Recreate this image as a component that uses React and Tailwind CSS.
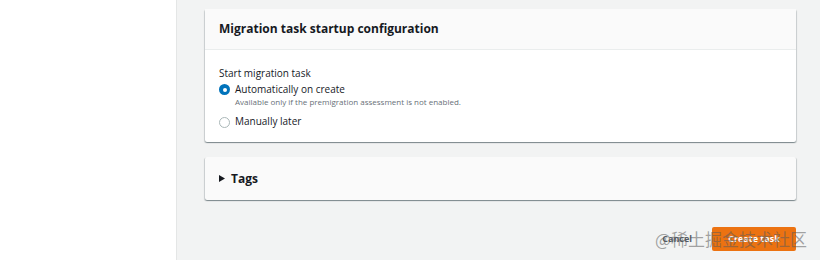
import React, { useState } from "react";

function Radio({ checked }) {
  return checked ? (
    <span className="mt-[1px] flex h-[11px] w-[11px] shrink-0 items-center justify-center rounded-full bg-[#0073bb]">
      <span className="h-[4px] w-[4px] rounded-full bg-white" />
    </span>
  ) : (
    <span className="mt-[1px] h-[11px] w-[11px] shrink-0 rounded-full border border-[#aab7b8] bg-white" />
  );
}

export default function App() {
  const [mode, setMode] = useState("auto");

  return (
    <div
      className="relative flex h-[260px] w-[820px] overflow-hidden bg-[#f2f3f3] text-[#16191f]"
      style={{ fontFamily: '"Open Sans", "Noto Sans", Arial, sans-serif' }}
    >
      <aside className="h-full w-[177px] shrink-0 border-r border-[#e4e6e6] bg-white" />

      <main className="flex flex-1 flex-col pl-[28px] pr-[24px] pt-[9px]">
        <section className="rounded-[2px] bg-white shadow-[0_1px_1px_0_rgba(0,28,36,0.3),1px_1px_1px_0_rgba(0,28,36,0.15),-1px_1px_1px_0_rgba(0,28,36,0.15)]">
          <div className="flex h-[41px] items-center border-b border-[#eaeded] bg-[#fafafa] px-[14px]">
            <h2 className="text-[12px] font-bold">Migration task startup configuration</h2>
          </div>
          <div className="px-[14px] pb-[14px] pt-[16px]">
            <div className="text-[10px] leading-[14px]">Start migration task</div>
            <label className="mt-[3px] flex cursor-pointer gap-[5px]" onClick={() => setMode("auto")}>
              <Radio checked={mode === "auto"} />
              <span className="flex flex-col">
                <span className="text-[10px] leading-[13px]">Automatically on create</span>
                <span className="text-[8px] leading-[11px] text-[#687078]">
                  Available only if the premigration assessment is not enabled.
                </span>
              </span>
            </label>
            <label className="mt-[8px] flex cursor-pointer items-center gap-[5px]" onClick={() => setMode("manual")}>
              <Radio checked={mode === "manual"} />
              <span className="text-[10px] leading-[13px]">Manually later</span>
            </label>
          </div>
        </section>

        <section className="mt-[15px] flex h-[43px] items-center gap-[6px] rounded-[2px] bg-[#fafafa] px-[14px] shadow-[0_1px_1px_0_rgba(0,28,36,0.3),1px_1px_1px_0_rgba(0,28,36,0.15),-1px_1px_1px_0_rgba(0,28,36,0.15)]">
          <svg width="6" height="7" viewBox="0 0 6 7">
            <path d="M0 0 L6 3.5 L0 7 Z" fill="#16191f" />
          </svg>
          <span className="text-[12px] font-bold">Tags</span>
        </section>

        <div className="mt-[27px] flex items-center justify-end gap-[20px]">
          <button className="text-[9px] font-bold text-[#545b64]">Cancel</button>
          <button className="h-[24px] w-[84px] rounded-[2px] bg-[#ec7211] text-[9px] font-bold text-white">
            Create task
          </button>
        </div>
      </main>

      <div
        className="pointer-events-none absolute left-[655px] top-[228px] text-[17px] leading-[22px] text-[rgba(90,90,90,0.55)]"
        style={{ fontFamily: '"Noto Sans CJK SC", sans-serif' }}
      >
        @稀土掘金技术社区
      </div>
    </div>
  );
}
